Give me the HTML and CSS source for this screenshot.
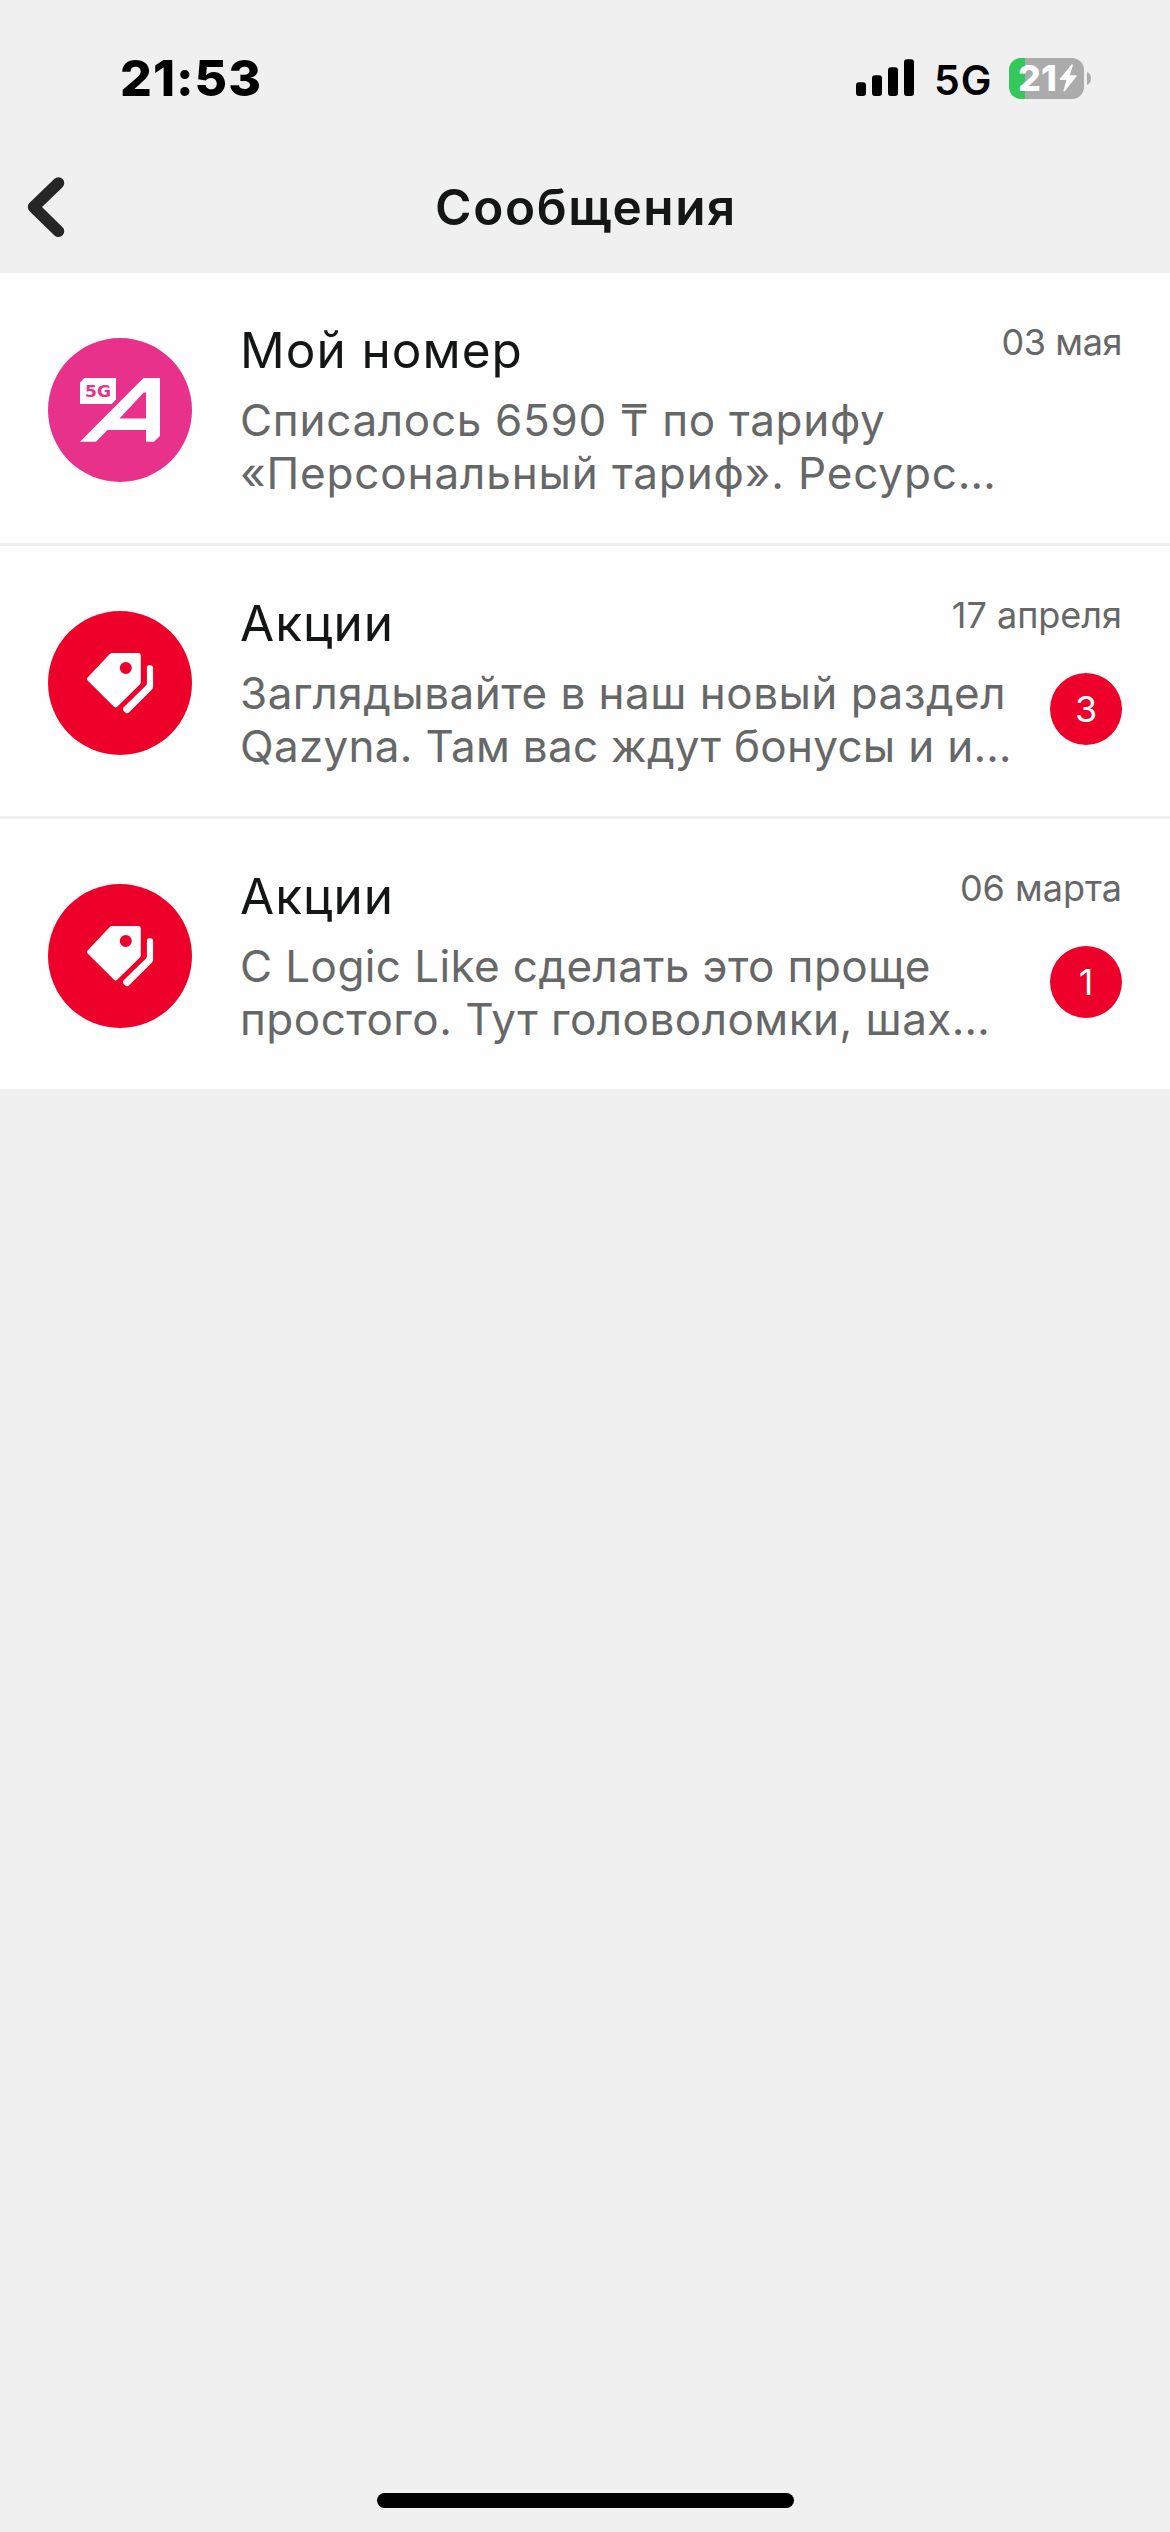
FILE: index.html
```html
<!DOCTYPE html>
<html lang="ru">
<head>
<meta charset="utf-8">
<meta name="viewport" content="width=device-width">
<title>Сообщения</title>
<link rel="stylesheet" href="styles.css">
</head>
<body>
<svg class="defs" width="0" height="0" aria-hidden="true">
  <symbol id="tags" viewBox="0 0 144 144">
    <path fill="#fff" fill-rule="evenodd" d="M63.8 42H90.4Q92.8 42 92.8 44.4V71.2Q92.8 72.4 91.8 73.4L69.2 95.8Q67.6 97.2 66 95.8L39.6 69.6Q38.2 68 39.6 66.4L62 42.8Q62.8 42 63.8 42ZM77.8 51.1A6 6 0 1 0 77.8 63.1A6 6 0 1 0 77.8 51.1Z"/>
    <path fill="#fff" d="M98.9 56.2Q98.9 54.2 100.9 54.2H102.6Q105.1 54.4 105.1 56.6V75.6Q105.1 77.2 104 78.4L80.9 101.4Q78.9 103.2 76.9 101.2L75.6 99.9Q73.9 98.1 75.7 96.3L98.2 74.2Q98.9 73.4 98.9 72.4Z"/>
  </symbol>
</svg>
<div class="screen">
  <header>
    <div class="status">
      <span class="time">21:53</span>
      <div class="indicators">
        <svg class="signal" width="58" height="38" viewBox="0 0 58 38">
          <rect x="0" y="23.3" width="10" height="13.7" rx="3"/>
          <rect x="16" y="16.3" width="10" height="20.7" rx="3"/>
          <rect x="32" y="8.3" width="10" height="28.7" rx="3"/>
          <rect x="48" y="0.3" width="10" height="36.7" rx="3"/>
        </svg>
        <span class="network">5G</span>
        <div class="battery">
          <div class="cell">
            <span class="percent">21</span>
            <svg class="bolt" width="18" height="28" viewBox="0 0 18 28"><path d="M12.6.6 1 14.6Q.2 16 1.6 16H7.4L4.4 26.4Q4.6 28 6 27L17.2 12.8Q18 11.2 16.6 11.2H10.8L13.8 1.4Q13.8-.2 12.6.6Z" fill="#fff"/></svg>
          </div>
          <svg width="4" height="13" viewBox="0 0 4 13"><path d="M0 0Q4 1.6 4 6.5T0 13Z" fill="#ababab"/></svg>
        </div>
      </div>
    </div>
    <nav class="bar">
      <svg class="back" width="38" height="62" viewBox="0 0 38 62"><path d="M31.5 7 6.6 31 31.5 55.3" fill="none" stroke="#262626" stroke-width="11.6" stroke-linecap="round" stroke-linejoin="round"/></svg>
      <h1>Сообщения</h1>
    </nav>
  </header>

  <main>
    <article class="message">
      <div class="avatar pink">
        <svg width="144" height="144" viewBox="0 0 144 144">
          <path fill="#fff" d="M36 40H68V61.5L63.7 66H32V44.7Z"/>
          <path fill="#fff" fill-rule="evenodd" d="M32 103.7 95.5 40H112V98L106 103.7H98V92H59.5L48 103.7ZM98 54.5H95.7L71.5 80.4H98Z"/>
          <text class="mark" x="37" y="59.2" textLength="26" lengthAdjust="spacingAndGlyphs">5G</text>
        </svg>
      </div>
      <div class="body">
        <div class="top"><h2>Мой номер</h2><time class="short">03 мая</time></div>
        <div class="bottom">
          <p><span class="line wide">Списалось 6590 ₸ по тарифу</span><span class="line wider">«Персональный тариф». Ресурс…</span></p>
        </div>
      </div>
    </article>
    <article class="message">
      <div class="avatar red"><svg width="144" height="144"><use href="#tags"/></svg></div>
      <div class="body">
        <div class="top"><h2>Акции</h2><time>17 апреля</time></div>
        <div class="bottom">
          <p><span class="line">Заглядывайте в наш новый раздел</span><span class="line tight">Qazyna. Там вас ждут бонусы и и…</span></p>
          <span class="badge">3</span>
        </div>
      </div>
    </article>
    <article class="message">
      <div class="avatar red"><svg width="144" height="144"><use href="#tags"/></svg></div>
      <div class="body">
        <div class="top"><h2>Акции</h2><time>06 марта</time></div>
        <div class="bottom">
          <p><span class="line snug">С Logic Like сделать это проще</span><span class="line">простого. Тут головоломки, шах…</span></p>
          <span class="badge">1</span>
        </div>
      </div>
    </article>
  </main>
  <div class="home"></div>
</div>
</body>
</html>
```
FILE: styles.css
```css
* { box-sizing: border-box; }

body {
  margin: 0;
  background: #f0f0f0;
  font-family: Inter, "Noto Sans", sans-serif;
  color: #141515;
}

.defs { display: block; }

.screen {
  display: flex;
  flex-direction: column;
  width: 1170px;
  height: 2532px;
}

header { height: 273px; }

.status {
  display: flex;
  justify-content: space-between;
  align-items: center;
  height: 141px;
  padding: 48px 79px 33px 120px;
  color: #000;
}

.time {
  font-size: 50px;
  font-weight: 800;
  line-height: 60px;
  letter-spacing: 1px;
}

.indicators { display: flex; align-items: center; }

.network {
  width: 75px;
  margin-left: 20px;
  padding-top: 3px;
  font-size: 41px;
  font-weight: 600;
  line-height: 48px;
  letter-spacing: 1px;
}

.battery {
  display: flex;
  align-items: center;
  gap: 3px;
}

.cell {
  display: flex;
  align-items: center;
  width: 75px;
  height: 41px;
  padding-left: 9px;
  border-radius: 12px;
  background: linear-gradient(to right, #34c759 16px, #ababab 16px);
}

.percent {
  width: 41px;
  font-size: 36px;
  font-weight: 800;
  line-height: 41px;
  letter-spacing: 0;
  color: #fff;
}

.bar {
  display: grid;
  grid-template-columns: 100px 1fr 100px;
  align-items: center;
  height: 132px;
}

.back { margin-left: 27px; }

h1, h2, p { margin: 0; }

h1 {
  padding-left: 2px;
  text-align: center;
  font-size: 49.5px;
  font-weight: 600;
  line-height: 60px;
  letter-spacing: 1.6px;
}

.message {
  display: flex;
  gap: 48px;
  height: 270px;
  padding: 47px 48px 0;
  background: #fefefe;
}

.message + .message { margin-top: 3px; }

.avatar {
  width: 144px;
  height: 144px;
  margin-top: 18px;
  border-radius: 50%;
  flex: none;
}

.avatar svg { display: block; }

.pink { background: #e8318a; }

.red { background: #ed0029; }

.mark {
  font-family: "DejaVu Sans", sans-serif;
  font-size: 16.5px;
  font-weight: 700;
  fill: #e8318a;
}

.body { flex: 1; }

.top, .bottom {
  display: flex;
  justify-content: space-between;
  align-items: flex-start;
}

h2 {
  font-size: 49.5px;
  font-weight: 400;
  line-height: 60px;
  letter-spacing: 1px;
}

time {
  font-size: 36px;
  line-height: 44px;
  color: #666767;
}

.short { letter-spacing: -0.4px; }

.bottom { margin-top: 14px; }

.line {
  display: block;
  font-size: 44px;
  line-height: 53px;
  letter-spacing: 0.48px;
  white-space: nowrap;
  color: #666767;
}

.wide { letter-spacing: 0.7px; }

.wider { letter-spacing: 0.86px; }

.snug { letter-spacing: 0.4px; }

.tight { letter-spacing: 0.29px; }

.badge {
  width: 72px;
  height: 72px;
  margin-top: 6px;
  border-radius: 50%;
  background: #ed0029;
  color: #fff;
  font-size: 36px;
  line-height: 72px;
  text-align: center;
}

.home {
  width: 417px;
  height: 15px;
  margin: auto auto 24px;
  border-radius: 8px;
  background: #000;
}
```
